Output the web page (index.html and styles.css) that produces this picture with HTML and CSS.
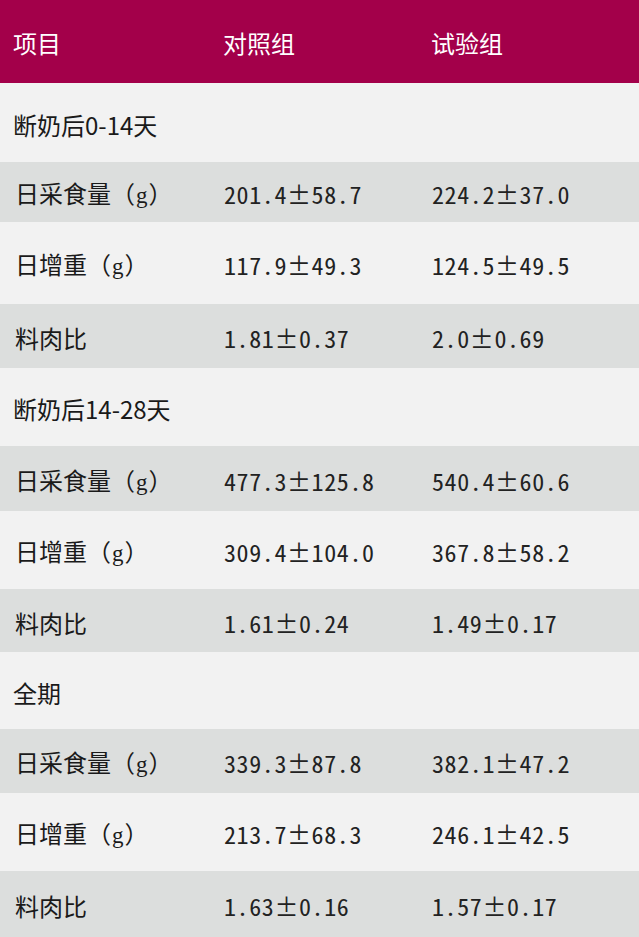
FILE: index.html
```html
<!DOCTYPE html>
<html lang="zh-CN">
<head>
<meta charset="utf-8">
<title>表</title>
<link rel="stylesheet" href="styles.css">
</head>
<body>
<div class="table">
  <div class="row head"><div class="cell">项目</div><div class="cell">对照组</div><div class="cell">试验组</div></div>
  <div class="row section light"><div class="cell">断奶后0-14天</div></div>
  <div class="row data gray"><div class="cell">日采食量（<span class="g">g</span>）</div><div class="cell num">201.4<span class="pm">±</span>58.7</div><div class="cell num">224.2<span class="pm">±</span>37.0</div></div>
  <div class="row data light"><div class="cell">日增重（<span class="g">g</span>）</div><div class="cell num">117.9<span class="pm">±</span>49.3</div><div class="cell num">124.5<span class="pm">±</span>49.5</div></div>
  <div class="row data gray"><div class="cell">料肉比</div><div class="cell num">1.81<span class="pm">±</span>0.37</div><div class="cell num">2.0<span class="pm">±</span>0.69</div></div>
  <div class="row section light"><div class="cell">断奶后14-28天</div></div>
  <div class="row data gray"><div class="cell">日采食量（<span class="g">g</span>）</div><div class="cell num">477.3<span class="pm">±</span>125.8</div><div class="cell num">540.4<span class="pm">±</span>60.6</div></div>
  <div class="row data light"><div class="cell">日增重（<span class="g">g</span>）</div><div class="cell num">309.4<span class="pm">±</span>104.0</div><div class="cell num">367.8<span class="pm">±</span>58.2</div></div>
  <div class="row data gray"><div class="cell">料肉比</div><div class="cell num">1.61<span class="pm">±</span>0.24</div><div class="cell num">1.49<span class="pm">±</span>0.17</div></div>
  <div class="row section light"><div class="cell">全期</div></div>
  <div class="row data gray"><div class="cell">日采食量（<span class="g">g</span>）</div><div class="cell num">339.3<span class="pm">±</span>87.8</div><div class="cell num">382.1<span class="pm">±</span>47.2</div></div>
  <div class="row data light"><div class="cell">日增重（<span class="g">g</span>）</div><div class="cell num">213.7<span class="pm">±</span>68.3</div><div class="cell num">246.1<span class="pm">±</span>42.5</div></div>
  <div class="row data gray"><div class="cell">料肉比</div><div class="cell num">1.63<span class="pm">±</span>0.16</div><div class="cell num">1.57<span class="pm">±</span>0.17</div></div>
</div>
</body>
</html>
```
FILE: styles.css
```css
html, body {
  margin: 0;
  padding: 0;
  background: #f2f2f2;
}
.table {
  width: 639px;
  font-family: "Noto Sans CJK SC", "Noto Sans", sans-serif;
  font-size: 24px;
  color: #1a1a1a;
}
.row {
  display: grid;
  grid-template-columns: 210px 208px 1fr;
  align-items: center;
  padding-left: 13px;
  padding-top: 4px;
  box-sizing: border-box;
}
.cell {
  line-height: 1;
  white-space: nowrap;
}
.head {
  background: #a3004a;
  color: #ffffff;
  padding-top: 2px;
}
.light { background: #f2f2f2; }
.gray { background: #dcdedd; }
.section .cell { grid-column: 1 / 4; }
.data .cell:first-child { padding-left: 2px; }
.num {
  font-feature-settings: "hwid" 1;
  letter-spacing: 0.6px;
  padding-left: 1px;
  color: #222222;
}
.pm {
  font-feature-settings: "fwid" 1;
}
.g {
  font-family: "Liberation Serif", serif;
  font-size: 23px;
  padding: 0 1px;
}
.row:nth-child(1) { height: 83px; }
.row:nth-child(2) { height: 79px; }
.row:nth-child(3) { height: 60px; }
.row:nth-child(4) { height: 82px; }
.row:nth-child(5) { height: 64px; }
.row:nth-child(6) { height: 78px; }
.row:nth-child(7) { height: 65px; }
.row:nth-child(8) { height: 78px; }
.row:nth-child(9) { height: 63px; }
.row:nth-child(10) { height: 77px; }
.row:nth-child(11) { height: 64px; }
.row:nth-child(12) { height: 78px; }
.row:nth-child(13) { height: 66px; }
```
